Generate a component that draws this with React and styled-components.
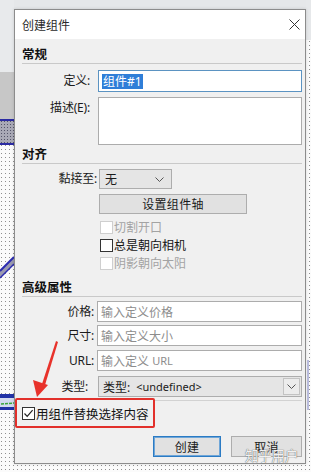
import React from "react";
import styled, { createGlobalStyle } from "styled-components";

const Global = createGlobalStyle`
  html, body { margin: 0; padding: 0; background: #fff; }
  body { font-family: "Noto Sans", "Noto Sans CJK SC", sans-serif; }
  * { box-sizing: border-box; }
`;

const FONT = `"Noto Sans", "Noto Sans CJK SC", sans-serif`;

const Stage = styled.div`
  position: relative;
  width: 311px;
  height: 472px;
  overflow: hidden;
  padding: 9px 0 0 14px;
`;

const Backdrop = styled.svg`
  position: absolute;
  left: 0;
  top: 0;
`;

const Dialog = styled.div`
  position: relative;
  width: 292px;
  height: 455px;
  border: 1px solid #8c8c8c;
  display: flex;
  flex-direction: column;
  font-family: ${FONT};
  font-size: 12px;
  color: #1b1b1b;
  box-shadow: 0 0 3px rgba(0, 0, 0, 0.15);
`;

const TitleBar = styled.div`
  height: 29px;
  background: #fff;
  display: flex;
  align-items: center;
  justify-content: space-between;
  padding: 0 5px 0 7px;
  color: #2a2a2a;
  font-size: 12px;
`;

const Body = styled.div`
  flex: 1;
  background: #f0f0f0;
  padding: 7px 3px 0 7px;
  display: flex;
  flex-direction: column;
`;

const SectionHeader = styled.div`
  height: 18px;
  line-height: 17px;
  font-weight: 700;
  font-size: 12.5px;
  color: #111;
  border-bottom: 1px solid #c9c9c9;
  margin-top: ${(p) => p.$mt || 0}px;
`;

const Field = styled.div`
  display: grid;
  grid-template-columns: ${(p) => p.$labelW}px 1fr;
  column-gap: ${(p) => p.$gap}px;
  align-items: ${(p) => (p.$top ? "start" : "center")};
  margin-top: ${(p) => p.$mt || 0}px;
`;

const Label = styled.div`
  text-align: right;
  white-space: nowrap;
  line-height: 16px;
  padding-top: ${(p) => p.$pt || 0}px;
  letter-spacing: -0.2px;
`;

const TextBox = styled.div`
  height: ${(p) => p.$h || 21}px;
  background: #fff;
  border: 1px solid ${(p) => (p.$focused ? "#5b93c2" : "#acacac")};
  padding: 0 3px;
  display: flex;
  align-items: center;
  color: ${(p) => (p.$placeholder ? "#8d8d8d" : "#1b1b1b")};
  white-space: nowrap;
  overflow: hidden;
`;

const TextArea = styled.div`
  height: ${(p) => p.$h}px;
  background: #fff;
  border: 1px solid #acacac;
`;

const Selected = styled.span`
  background: #2f7ed8;
  color: #fff;
  line-height: 15px;
  padding: 0 1px;
`;

const Combo = styled.div`
  width: ${(p) => (p.$w ? `${p.$w}px` : "auto")};
  height: ${(p) => p.$h || 20}px;
  background: #e5e5e5;
  border: 1px solid #adadad;
  display: flex;
  align-items: center;
  justify-content: space-between;
  padding-left: ${(p) => p.$pl || 5}px;
  padding-right: ${(p) => p.$pr || 0}px;
  white-space: nowrap;
`;

const ComboText = styled.span`
  display: flex;
  gap: 6px;
  align-items: center;
`;

const Latin = styled.span`
  font-size: 11px;
  font-family: "Noto Sans", sans-serif;
`;

const ChevronBox = styled.div`
  width: 17px;
  height: 17px;
  margin-right: 1px;
  border: 1px solid #c3c3c3;
  background: #ececec;
  display: flex;
  align-items: center;
  justify-content: center;
`;

const PushButton = styled.div`
  width: ${(p) => p.$w}px;
  height: ${(p) => p.$h || 21}px;
  background: #e1e1e1;
  border: 1px solid ${(p) => (p.$default ? "#2b7bc4" : "#adadad")};
  box-shadow: ${(p) => (p.$default ? "inset 0 0 0 1px #6fa6d8" : "none")};
  display: flex;
  align-items: center;
  justify-content: center;
  margin-left: ${(p) => p.$ml || 0}px;
  margin-top: ${(p) => p.$mt || 0}px;
  color: #1b1b1b;
  letter-spacing: 0.3px;
`;

const CheckList = styled.div`
  display: flex;
  flex-direction: column;
  margin-top: ${(p) => p.$mt || 0}px;
  padding-left: ${(p) => p.$pl || 0}px;
`;

const CheckRow = styled.div`
  height: 18px;
  display: flex;
  align-items: center;
  gap: 1px;
  color: ${(p) => (p.$disabled ? "#a3a3a3" : "#151515")};
  font-size: ${(p) => p.$fs || 12}px;
`;

const Box = styled.div`
  width: 13px;
  height: 13px;
  background: #fff;
  border: 1px solid ${(p) => (p.$disabled ? "#cfcfcf" : "#333")};
  display: flex;
  align-items: center;
  justify-content: center;
`;

const FooterRow = styled.div`
  display: flex;
  align-items: flex-start;
  margin-top: 1px;
`;

const Highlight = styled.div`
  width: 140px;
  height: 30px;
  margin-left: -7px;
  border: 2px solid #e2302b;
  border-radius: 2px;
  display: flex;
  align-items: center;
  padding-left: 5px;
`;

const Rule = styled.div`
  flex: 1;
  margin-top: 2px;
  border-top: 1px solid #d2d2d2;
`;

const ButtonRow = styled.div`
  display: flex;
  justify-content: flex-end;
  gap: 10px;
  margin-top: 8px;
`;

const Overlay = styled.svg`
  position: absolute;
  left: 0;
  top: 0;
  pointer-events: none;
`;

const Watermark = styled.div`
  position: absolute;
  left: 245px;
  top: 448px;
  font-family: "Noto Sans CJK SC", sans-serif;
  font-size: 13.5px;
  line-height: 15px;
  color: rgba(255, 255, 255, 0.92);
  text-shadow: 0 0 1px #6d6d6d, 0 0 1px #6d6d6d;
  letter-spacing: -0.2px;
`;

const Chevron = () => (
  <svg width="9" height="5" viewBox="0 0 9 5">
    <path d="M0.5 0.5 L4.5 4.5 L8.5 0.5" fill="none" stroke="#555" strokeWidth="1" />
  </svg>
);

const Check = ({ checked, disabled }) => (
  <Box $disabled={disabled}>
    {checked && (
      <svg width="11" height="11" viewBox="0 0 11 11">
        <path d="M1.5 5.5 L4.2 8.3 L9.6 2.2" fill="none" stroke="#222" strokeWidth="1.2" />
      </svg>
    )}
  </Box>
);

export default function App() {
  return (
    <>
      <Global />
      <Stage>
        <Backdrop width="311" height="472" viewBox="0 0 311 472">
          <defs>
            <pattern id="dots" width="4" height="4" patternUnits="userSpaceOnUse">
              <rect width="4" height="4" fill="#fbfbfb" />
              <rect x="1" y="1" width="1" height="1" fill="#8f8f8f" />
            </pattern>
            <pattern id="hatch" width="3" height="3" patternUnits="userSpaceOnUse">
              <rect width="3" height="3" fill="#a9a9b6" />
              <rect x="1" y="1" width="1" height="1" fill="#55556a" />
            </pattern>
          </defs>
          <rect width="311" height="472" fill="url(#dots)" />
          <rect x="0" y="0" width="311" height="9" fill="#e5e7e9" />
          <rect x="0" y="0" width="14" height="72" fill="#e8eaec" />
          <rect x="0" y="72" width="14" height="48" fill="#c7c7c7" />
          <rect x="0" y="120" width="14" height="25" fill="url(#hatch)" />
          <rect x="0" y="119" width="14" height="2" fill="#2b2ba3" />
          <rect x="0" y="143" width="14" height="2" fill="#2b2ba3" />
          <polygon points="0,271 14,257 14,264 0,278" fill="#9a9ab0" />
          <line x1="0" y1="271" x2="14" y2="257" stroke="#2b2bb0" strokeWidth="2" />
          <line x1="0" y1="278" x2="14" y2="264" stroke="#2b2bb0" strokeWidth="1.5" />
          <rect x="0" y="394" width="14" height="4" fill="#2233a6" />
          <rect x="0" y="398" width="14" height="9" fill="#d4dbef" />
          <line x1="1" y1="404" x2="14" y2="403" stroke="#3aa63a" strokeWidth="1.5" strokeDasharray="3 1" />
          <rect x="0" y="407" width="14" height="3" fill="#2233a6" />
          <rect x="306" y="0" width="5" height="40" fill="#e6e8ea" />
          <line x1="308" y1="360" x2="308" y2="410" stroke="#7c82c6" strokeWidth="1" />
        </Backdrop>

        <Dialog>
          <TitleBar>
            <span>创建组件</span>
            <svg width="11" height="11" viewBox="0 0 11 11">
              <path d="M0.5 0.5 L10.5 10.5 M10.5 0.5 L0.5 10.5" stroke="#333" strokeWidth="1" />
            </svg>
          </TitleBar>
          <Body>
            <SectionHeader>常规</SectionHeader>
            <Field $labelW={68} $gap={8} $mt={6}>
              <Label>定义:</Label>
              <TextBox $focused $h={22}>
                <Selected>组件#1</Selected>
              </TextBox>
            </Field>
            <Field $labelW={68} $gap={8} $mt={5} $top>
              <Label $pt={3}>描述(E):</Label>
              <TextArea $h={48} />
            </Field>

            <SectionHeader $mt={1}>对齐</SectionHeader>
            <Field $labelW={75} $gap={2} $mt={5}>
              <Label>黏接至:</Label>
              <Combo $w={73} $pr={7}>
                <span>无</span>
                <Chevron />
              </Combo>
            </Field>
            <PushButton $w={148} $h={20} $ml={77} $mt={5}>设置组件轴</PushButton>
            <CheckList $mt={4} $pl={78}>
              <CheckRow $disabled>
                <Check disabled />
                <span>切割开口</span>
              </CheckRow>
              <CheckRow>
                <Check />
                <span>总是朝向相机</span>
              </CheckRow>
              <CheckRow $disabled>
                <Check disabled />
                <span>阴影朝向太阳</span>
              </CheckRow>
            </CheckList>

            <SectionHeader $mt={7}>高级属性</SectionHeader>
            <Field $labelW={72} $gap={3} $mt={4}>
              <Label>价格:</Label>
              <TextBox $placeholder>输入定义价格</TextBox>
            </Field>
            <Field $labelW={72} $gap={3} $mt={3}>
              <Label>尺寸:</Label>
              <TextBox $placeholder>输入定义大小</TextBox>
            </Field>
            <Field $labelW={72} $gap={3} $mt={4}>
              <Label>URL:</Label>
              <TextBox $placeholder>
                输入定义&nbsp;<Latin>URL</Latin>
              </TextBox>
            </Field>
            <Field $labelW={66} $gap={10} $mt={5}>
              <Label>类型:</Label>
              <Combo $h={21} $pl={4} $pr={0}>
                <ComboText>
                  <span>类型:</span>
                  <Latin>&lt;undefined&gt;</Latin>
                </ComboText>
                <ChevronBox>
                  <Chevron />
                </ChevronBox>
              </Combo>
            </Field>

            <FooterRow>
              <Highlight>
                <CheckRow $fs={12.5}>
                  <Check checked />
                  <span>用组件替换选择内容</span>
                </CheckRow>
              </Highlight>
              <Rule />
            </FooterRow>

            <ButtonRow>
              <PushButton $w={68} $default>创建</PushButton>
              <PushButton $w={71}>取消</PushButton>
            </ButtonRow>
          </Body>
        </Dialog>

        <Overlay width="311" height="472" viewBox="0 0 311 472">
          <path d="M56 341 L58 342 L45 385 L42 384 Z" fill="#e8322b" />
          <polygon points="37,397 33,380 48,385" fill="#e8322b" />
        </Overlay>
        <Watermark>知乎用户</Watermark>
      </Stage>
    </>
  );
}
